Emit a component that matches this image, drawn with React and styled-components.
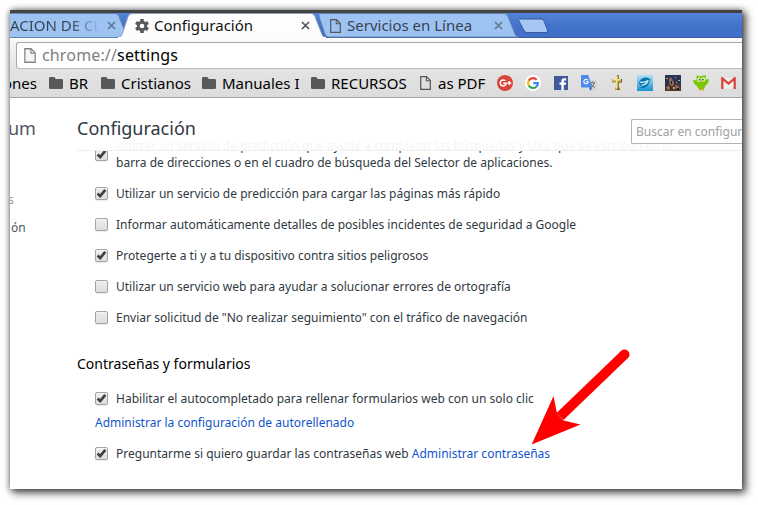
import React from "react";
import styled, { createGlobalStyle } from "styled-components";

const GlobalStyle = createGlobalStyle`
  * { box-sizing: border-box; }
  body {
    margin: 0;
    background: #fff;
    font-family: "Noto Sans", sans-serif;
    overflow: hidden;
  }
  svg { display: block; flex: none; }
`;

const Page = styled.div`
  width: 758px;
  height: 505px;
  padding: 10px;
`;

const Window = styled.div`
  position: relative;
  width: 732px;
  height: 479px;
  overflow: hidden;
  display: flex;
  flex-direction: column;
  background: #fff;
`;

const Shadow = styled.div`
  width: 732px;
  height: 479px;
  box-shadow: 3px 3px 8px 1px rgba(0, 0, 0, 0.66), 0 0 6px rgba(0, 0, 0, 0.4);
`;

const TabStrip = styled.div`
  flex: none;
  display: flex;
  height: 28px;
  border-top: 3px solid #444;
  border-bottom: 1px solid #3a5a9c;
  background: linear-gradient(#5384d9, #4170c8 60%, #4170c8);
`;

const TabBox = styled.div`
  position: relative;
  flex: none;
  display: flex;
  align-items: center;
  width: ${(p) => p.$width}px;
  height: 25px;
  margin-left: ${(p) => p.$offset}px;
  padding-left: ${(p) => p.$pad}px;
  z-index: ${(p) => (p.$active ? 2 : 1)};
  color: ${(p) => (p.$active ? "#111" : "#384350")};
`;

const TabShape = styled.svg`
  position: absolute;
  left: 0;
  top: 0;
`;

const TabIcon = styled.span`
  position: relative;
  width: ${(p) => p.$width}px;
`;

const TabTitle = styled.span`
  position: relative;
  width: ${(p) => p.$width}px;
  margin-bottom: 2px;
  font-size: 15px;
  line-height: 22px;
  white-space: nowrap;
  ${(p) =>
    p.$fade &&
    `background: linear-gradient(90deg, #384350 62%, rgba(56,67,80,.05) 92%);
     background-clip: text; -webkit-background-clip: text; color: transparent;`}
`;

const CloseSvg = styled.svg`
  position: relative;
`;

const NewTab = styled.svg`
  margin: 5px 0 0 -3px;
`;

const Toolbar = styled.div`
  flex: none;
  height: 32px;
  padding: 4px 0 2px 6px;
  background: linear-gradient(#fff, #f4f4f4 5px, #e2e2e2);
`;

const Omnibox = styled.div`
  display: flex;
  align-items: center;
  height: 27px;
  padding-left: 7px;
  border: 1px solid #a9a9a9;
  border-bottom-color: #bcbcbc;
  border-right: 0;
  border-radius: 3px 0 0 3px;
  background: #fff;
`;

const Url = styled.span`
  margin: 0 0 2px 6px;
  font-size: 16px;
  line-height: 22px;
  letter-spacing: 0.15px;
  color: #000;
`;

const Scheme = styled.span`
  color: #808080;
`;

const Bookmarks = styled.div`
  flex: none;
  display: flex;
  align-items: center;
  height: 28px;
  padding-bottom: 2px;
  border-bottom: 1px solid #a5a5a5;
  background: linear-gradient(#e3e3e3, #dcdcdc);
`;

const Bookmark = styled.div`
  flex: none;
  display: flex;
  align-items: center;
  gap: ${(p) => p.$gap ?? 6}px;
  width: ${(p) => p.$width}px;
  margin-left: ${(p) => p.$offset || 0}px;
  font-size: 15px;
  line-height: 22px;
  white-space: nowrap;
  color: #000;
`;

const Body = styled.div`
  position: relative;
  flex: 1;
  display: flex;
  overflow: hidden;
`;

const Sidebar = styled.nav`
  flex: none;
  width: 67px;
  padding-top: 17px;
  color: #4e565f;
`;

const Brand = styled.div`
  margin-left: -2px;
  font-size: 18px;
  line-height: 26px;
`;

const NavItem = styled.div`
  margin-top: ${(p) => p.$top}px;
  margin-left: ${(p) => p.$left}px;
  font-size: 12px;
  line-height: 17px;
  color: ${(p) => (p.$dim ? "#999" : "#4e565f")};
`;

const Settings = styled.main`
  flex: 1;
  padding: 39px 0 0 18px;
`;

const Header = styled.header`
  position: absolute;
  top: 0;
  left: 67px;
  right: 0;
  height: 53px;
  display: flex;
  justify-content: space-between;
  padding-top: 17px;
  border-bottom: 1px solid #eee;
  background: rgba(255, 255, 255, 0.94);
`;

const Title = styled.h1`
  margin: 0;
  font-size: 18px;
  font-weight: 400;
  line-height: 26px;
  color: #303942;
`;

const Search = styled.div`
  width: 111px;
  height: 25px;
  margin-top: 4px;
  padding-left: 4px;
  border: 1px solid #b3b3b3;
  border-right: 0;
  border-radius: 2px 0 0 2px;
  background: #fff;
  overflow: hidden;
  white-space: nowrap;
  font-size: 12px;
  line-height: 23px;
  color: #a0a0a0;
`;

const Option = styled.label`
  display: flex;
  align-items: center;
  gap: 8px;
  min-height: 17px;
  margin-bottom: ${(p) => p.$after ?? 14}px;
  font-size: 12px;
  line-height: 17px;
  letter-spacing: 0.008px;
  white-space: pre-line;
  color: #303942;
`;

const Check = styled.span`
  flex: none;
  width: 13px;
  height: 13px;
  border: 1px solid #a3a3a3;
  border-radius: 2px;
  background: linear-gradient(#ededed, #dedede);
  box-shadow: inset 0 1px 1px rgba(255, 255, 255, 0.6), 0 1px 1px rgba(0, 0, 0, 0.08);
`;

const Section = styled.h2`
  margin: 28px 0 16px -18px;
  font-size: 14px;
  font-weight: 400;
  line-height: 20px;
  color: #000;
`;

const Link = styled.a`
  color: #1155cc;
`;

const LinkRow = styled.div`
  margin-bottom: 14px;
  font-size: 12px;
  line-height: 17px;
`;

const Pointer = styled.svg`
  position: absolute;
  left: 520px;
  top: 338px;
`;

const Close = ({ color }) => (
  <CloseSvg width="9" height="9" viewBox="0 0 9 9">
    <path d="M1 1l7 7M8 1L1 8" stroke={color} strokeWidth="1.7" />
  </CloseSvg>
);

const PageIcon = ({ stroke = "#555", fill = "none", w = 11, h = 14 }) => (
  <svg width={w} height={h} viewBox="0 0 11 14">
    <path d="M.7.7h5.8l3.8 3.8v8.8H.7z" fill={fill} stroke={stroke} strokeWidth="1.2" />
    <path d="M6.3.8v4h4" fill="none" stroke={stroke} strokeWidth="1.1" />
  </svg>
);

const Folder = () => (
  <svg width="14" height="12" viewBox="0 0 14 12">
    <path d="M0 1.2Q0 0 1.2 0h4.1l1.6 2h5.9Q14 2 14 3.2v7.6q0 1.2-1.2 1.2H1.2Q0 12 0 10.8z" fill="#595959" />
  </svg>
);

const Gear = () => (
  <svg width="14" height="14" viewBox="0 0 14 14">
    <g fill="#595959">
      {[0, 60, 120].map((a) => (
        <rect key={a} x="5.2" y="0" width="3.6" height="14" rx=".6" transform={`rotate(${a} 7 7)`} />
      ))}
      <circle cx="7" cy="7" r="5.2" />
    </g>
    <circle cx="7" cy="7" r="2.3" fill="#fff" />
  </svg>
);

const GooglePlus = () => (
  <svg width="16" height="16" viewBox="0 0 16 16">
    <circle cx="8" cy="8" r="8" fill="#d9453a" />
    <path d="M8.3 5.8A3 3 0 1 0 9.2 8.2H6.2" fill="none" stroke="#fff" strokeWidth="1.5" />
    <path d="M12.3 6v4M10.3 8h4" stroke="#fff" strokeWidth="1.3" />
  </svg>
);

const Google = () => (
  <svg width="16" height="16" viewBox="0 0 16 16">
    <circle cx="8" cy="8" r="8" fill="#fff" />
    <g fill="none" strokeWidth="2.2">
      <path d="M11.7 4.8A4.9 4.9 0 0 0 3.7 5.7" stroke="#ea4335" />
      <path d="M3.7 5.7a4.9 4.9 0 0 0 0 4.7" stroke="#fbbc05" />
      <path d="M3.7 10.4a4.9 4.9 0 0 0 7.6 1.3" stroke="#34a853" />
      <path d="M11.3 11.7A4.9 4.9 0 0 0 12.9 8.2H8.2" stroke="#4285f4" />
    </g>
  </svg>
);

const Facebook = () => (
  <svg width="14" height="14" viewBox="0 0 14 14">
    <rect width="14" height="14" fill="#415a9b" />
    <path d="M7.4 14V8.700H5.500V6.500h1.900V5q0-2.700 2.800-2.700h2v2.100h-1.400q-1 0-1 1v1.100h2.400l-.3 2.200H9.800V14z" fill="#fff" />
  </svg>
);

const Translate = () => (
  <svg width="16" height="16" viewBox="0 0 16 16">
    <path d="M6 5h9q1 0 1 1v9q0 1-1 1H9z" fill="#d4d4d4" />
    <path d="M9 7.7h5M11.500 6.500v1.200M13.300 8q-1 3.500-4 5M9.800 8.300q1 3 4 4.300" stroke="#68737d" fill="none" />
    <path d="M1 0h6.300l3.800 12.500H1q-1 0-1-1V1q0-1 1-1z" fill="#4d8bea" />
    <path d="M8 12.500h3.100L9.500 16z" fill="#3568c5" />
    <path d="M6.800 5.200A2.200 2.200 0 1 0 7.200 6.800H5" fill="none" stroke="#fff" strokeWidth="1.1" />
  </svg>
);

const Cross = () => (
  <svg width="10" height="15" viewBox="0 0 10 15">
    <path d="M4 0h3v4h3v3.500H7V12l1.500 3h-6L4 12V7.500H0V4h4z" fill="#b79c3c" />
    <path d="M6.500 0v4H10v3.500H6.500V12L8 15H5.500V7H9V5H5.500V0z" fill="#6e5a20" />
    <path d="M4.800.5v13M.8 4.800h8" stroke="#f6e597" strokeWidth="1.500" />
  </svg>
);

const Bird = () => (
  <svg width="16" height="16" viewBox="0 0 16 16">
    <defs>
      <linearGradient id="sky" x2="0" y2="1">
        <stop stopColor="#b5e0f2" />
        <stop offset="1" stopColor="#1b92d2" />
      </linearGradient>
    </defs>
    <rect width="16" height="16" fill="url(#sky)" />
    <path d="M2 7.500Q4 2.500 9.500 2.600q3 .2 4.500 2.400-1 .2-1.600.8Q12.500 9.500 9 12q-3 2-6 1l2.500-1.500Q2.500 11 2 7.500z" fill="#0875af" />
    <path d="M3 7.200q4.500.8 8.500-2M4.500 10.200q4-.3 6.500-3.200" stroke="#d9f2ff" fill="none" strokeWidth="1.200" />
  </svg>
);

const Game = () => (
  <svg width="16" height="16" viewBox="0 0 16 16">
    <rect width="16" height="16" fill="#263553" />
    <path d="M0 13l3-3 2-8 3 2 1 5 3-1 4 3v5H0z" fill="#513731" />
    <path d="M4 4l2-2 1 3 2 2-1 4-3-1zM1 12l3-1 2 3-3 1zM10 10l3 1 2 3-4-1z" fill="#9c7058" />
    <path d="M10 2h1v1h-1zM13 5h2v1h-2zM1 3h2v1H1zM11 7h1v1h-1zM8 12h2v2H8z" fill="#c8a383" />
    <path d="M6 6h1v3H6zM5 12h1v3H5zM12 13h2v2h-2z" fill="#211d29" />
  </svg>
);

const Owl = () => (
  <svg width="16" height="16" viewBox="0 0 16 16">
    <path d="M3.500 0Q5 1.800 8 1.200 10.500 1 12.500 0l.3 4.500L16 4.300q-.3 4.500-3.600 6.200-1 4-4 4-3.300 0-4.400-3.500Q.6 9.500 0 5l3.500.5z" fill="#78c800" />
    <ellipse cx="6.200" cy="4.700" rx="2" ry="2.200" fill="#dcf6b6" />
    <ellipse cx="10.300" cy="4.500" rx="2" ry="2.200" fill="#dcf6b6" />
    <circle cx="6.700" cy="4.700" r=".9" fill="#405c20" />
    <circle cx="9.900" cy="4.600" r=".9" fill="#405c20" />
    <path d="M7.200 6h2.200L8.400 8zM6 14h1.800v1.500H6zM9 14h1.800v1.500H9z" fill="#f09a18" />
  </svg>
);

const Gmail = () => (
  <svg width="15" height="12" viewBox="0 0 15 12">
    <path d="M1 1h13v10.500H1z" fill="#eee" />
    <path d="M1.300 12V1.300l6.200 5.200 6.200-5.200V12" fill="none" stroke="#d84339" strokeWidth="2.200" />
  </svg>
);

const CheckBox = ({ checked }) => (
  <Check>
    {checked && (
      <svg width="11" height="11" viewBox="0 0 11 11">
        <path d="M1.600 5.500l2.600 2.600L9.300 1.800" fill="none" stroke="#3f3f3f" strokeWidth="2.700" />
      </svg>
    )}
  </Check>
);

const Tab = ({ width, offset, pad, active, path, icon, iconWidth, title, titleWidth, fade }) => (
  <TabBox $width={width} $offset={offset} $pad={pad} $active={active}>
    <TabShape width={width} height="25" viewBox={`0 0 ${width} 25`}>
      <path d={path} fill={active ? "#fdfdfd" : "#9dc3f3"} stroke={active ? "#8c9db8" : "#6583b0"} strokeWidth="1" />
      {active && <path d={`M0 24.500H${width}`} stroke="#fdfdfd" />}
    </TabShape>
    {icon && <TabIcon $width={iconWidth}>{icon}</TabIcon>}
    <TabTitle $width={titleWidth} $fade={fade}>{title}</TabTitle>
    <Close color={active ? "#555" : "#617993"} />
  </TabBox>
);

const folders = [
  ["BR", 52],
  ["Cristianos", 101],
  ["Manuales I", 109],
  ["RECURSOS", 109],
];

const favicons = [
  [GooglePlus, 28],
  [Google, 29],
  [Facebook, 27],
  [Translate, 31],
  [Cross, 25],
  [Bird, 28],
  [Game, 28],
  [Owl, 28],
  [Gmail, 15],
];

const privacy = [
  ["Utilizar un servicio de predicción que ayude a completar las búsquedas y URL que se escriben en la\nbarra de direcciones o en el cuadro de búsqueda del Selector de aplicaciones.", true],
  ["Utilizar un servicio de predicción para cargar las páginas más rápido", true],
  ["Informar automáticamente detalles de posibles incidentes de seguridad a Google", false],
  ["Protegerte a ti y a tu dispositivo contra sitios peligrosos", true],
  ["Utilizar un servicio web para ayudar a solucionar errores de ortografía", false],
  ['Enviar solicitud de "No realizar seguimiento" con el tráfico de navegación', false],
];

export default function App() {
  return (
    <Page>
      <GlobalStyle />
      <Shadow>
        <Window>
          <TabStrip>
            <Tab
              width={121} offset={0} pad={0}
              path="M-2 .5H105q3 0 4 3l7 18q1 3 4 3H-2z"
              title="ACION DE CL" titleWidth={97} fade
            />
            <Tab
              width={208} offset={-13} pad={17} active
              path="M0 24.500q3 0 4-3l6-18q1-3 4-3H193q3 0 4 3l7 18q1 3 4 3z"
              icon={<Gear />} iconWidth={19}
              title="Configuración" titleWidth={147}
            />
            <Tab
              width={202} offset={-9} pad={13}
              path="M11 24q-2 0-3-3L2 3.500Q1 .5 5 .5H187q3 0 4 3l7 17.500q1 3 4 3z"
              icon={<PageIcon />} iconWidth={17}
              title="Servicios en Línea" titleWidth={147}
            />
            <NewTab width="34" height="17" viewBox="0 0 34 17">
              <path d="M3.500 1H25q2 0 3 2l3.500 9q.8 2.500-1.500 2.500H11q-2 0-3-2L3 3Q2 1 3.500 1z" fill="#a5c7f2" stroke="#38599a" />
            </NewTab>
          </TabStrip>
          <Toolbar>
            <Omnibox>
              <PageIcon stroke="#858585" fill="#f5f5f5" w={12} h={15} />
              <Url><Scheme>chrome://</Scheme>settings</Url>
            </Omnibox>
          </Toolbar>
          <Bookmarks>
            <Bookmark $width={46} $offset={-7}>ones</Bookmark>
            {folders.map(([name, width]) => (
              <Bookmark key={name} $width={width}><Folder />{name}</Bookmark>
            ))}
            <Bookmark $width={77} $gap={7}><PageIcon />as PDF</Bookmark>
            {favicons.map(([Icon, width], i) => (
              <Bookmark key={i} $width={width}><Icon /></Bookmark>
            ))}
          </Bookmarks>
          <Body>
            <Sidebar>
              <Brand>um</Brand>
              <NavItem $top={50} $left={-2} $dim>s</NavItem>
              <NavItem $top={11} $left={1}>ón</NavItem>
            </Sidebar>
            <Settings>
              {privacy.map(([text, checked]) => (
                <Option key={text}><CheckBox checked={checked} /><span>{text}</span></Option>
              ))}
              <Section>Contraseñas y formularios</Section>
              <Option $after={7}>
                <CheckBox checked />
                <span>Habilitar el autocompletado para rellenar formularios web con un solo clic</span>
              </Option>
              <LinkRow><Link>Administrar la configuración de autorellenado</Link></LinkRow>
              <Option>
                <CheckBox checked />
                <span>Preguntarme si quiero guardar las contraseñas web <Link>Administrar contraseñas</Link></span>
              </Option>
            </Settings>
            <Header>
              <Title>Configuración</Title>
              <Search>Buscar en configuración</Search>
            </Header>
          </Body>
          <Pointer width="112" height="100" viewBox="0 0 112 100">
            <path d="M94.500 6.500L30 68.500" stroke="#f00" strokeWidth="10" strokeLinecap="butt" />
            <circle cx="94.500" cy="6.500" r="5" fill="#f00" />
            <path d="M1.700 96.500L23.500 48 27 65.500 33.500 72.500 50.500 76.500z" fill="#f00" />
          </Pointer>
        </Window>
      </Shadow>
    </Page>
  );
}
